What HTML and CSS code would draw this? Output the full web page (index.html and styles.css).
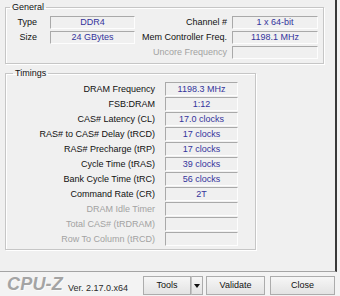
FILE: index.html
```html
<!DOCTYPE html>
<html>
<head>
<meta charset="utf-8">
<link rel="stylesheet" href="styles.css">
</head>
<body>
<div class="panel">
  <fieldset class="group general">
    <legend class="lg-general">General</legend>
    <div class="ggrid">
      <div class="lab l1">Type</div>
      <div class="fld">DDR4</div>
      <div class="lab l3">Channel #</div>
      <div class="fld">1 x 64-bit</div>
      <div class="lab l1">Size</div>
      <div class="fld">24 GBytes</div>
      <div class="lab l3">Mem Controller Freq.</div>
      <div class="fld">1198.1 MHz</div>
      <div class="lab l1"></div>
      <div class="empty"></div>
      <div class="lab l3 dis">Uncore Frequency</div>
      <div class="fld"></div>
    </div>
  </fieldset>
  <fieldset class="group timings">
    <legend class="lg-timings">Timings</legend>
    <div class="tgrid">
      <div class="lab tl">DRAM Frequency</div><div class="fld">1198.3 MHz</div>
      <div class="lab tl">FSB:DRAM</div><div class="fld">1:12</div>
      <div class="lab tl">CAS# Latency (CL)</div><div class="fld">17.0 clocks</div>
      <div class="lab tl">RAS# to CAS# Delay (tRCD)</div><div class="fld">17 clocks</div>
      <div class="lab tl">RAS# Precharge (tRP)</div><div class="fld">17 clocks</div>
      <div class="lab tl">Cycle Time (tRAS)</div><div class="fld">39 clocks</div>
      <div class="lab tl">Bank Cycle Time (tRC)</div><div class="fld">56 clocks</div>
      <div class="lab tl">Command Rate (CR)</div><div class="fld">2T</div>
      <div class="lab tl dis">DRAM Idle Timer</div><div class="fld"></div>
      <div class="lab tl dis">Total CAS# (tRDRAM)</div><div class="fld"></div>
      <div class="lab tl dis">Row To Column (tRCD)</div><div class="fld"></div>
    </div>
  </fieldset>
</div>
<div class="footer">
  <div class="logo">CPU-Z</div>
  <div class="ver">Ver. 2.17.0.x64</div>
  <div class="btn tools">Tools</div>
  <div class="btn arrow"><span class="tri"></span></div>
  <div class="btn validate">Validate</div>
  <div class="btn close">Close</div>
</div>
</body>
</html>
```
FILE: styles.css
```css
* { box-sizing: border-box; }
body {
  margin: 0;
  width: 340px;
  height: 296px;
  overflow: hidden;
  background: #f3f3f3;
  font-family: "Liberation Sans", Arial, sans-serif;
  font-size: 9px;
  color: #111;
}
.panel {
  width: 337px;
  height: 272px;
  background: #f0f0f0;
  border-right: 2px solid #3a3a3a;
  border-bottom: 1px solid #a4a4a4;
  padding: 2px 0 0 5px;
}
.group {
  margin: 0;
  border: 1px solid #c6c6c6;
  box-shadow: inset 1px 1px 0 #fff, 1px 1px 0 #fff;
  min-width: 0;
}
legend {
  line-height: 10px;
  padding: 0 2px;
  color: #111;
}
.lg-general { margin-left: 4px; }
.lg-timings { margin-left: 7px; }
.general {
  width: 319px;
  padding: 4px 5px 4px 0;
}
.ggrid {
  display: grid;
  grid-template-columns: 44px 85px 97px 86px;
  grid-auto-rows: 13px;
  row-gap: 2px;
}
.lab {
  text-align: right;
  white-space: nowrap;
  line-height: 13px;
}
.l1 { padding-right: 13px; }
.l3 { padding-right: 5px; }
.dis { color: #a2a2a2; }
.fld {
  border: 1px solid;
  border-color: #a9a9a9 #fdfdfd #fdfdfd #a9a9a9;
  text-align: center;
  color: #34349c;
  line-height: 11px;
  white-space: nowrap;
}
.timings {
  margin-top: 4px;
  width: 251px;
  padding: 4px 17px 3px 0;
}
.tgrid {
  display: grid;
  grid-template-columns: 159px 73px;
  grid-auto-rows: 14px;
  row-gap: 1px;
}
.tl { padding-right: 10px; line-height: 14px; }
.tgrid .fld { line-height: 12px; }
.footer {
  display: flex;
  align-items: flex-start;
  padding: 4px 0 0 7px;
  height: 23px;
}
.logo {
  width: 61px;
  margin-top: -1px;
  font-size: 18px;
  line-height: 18px;
  font-weight: bold;
  font-style: italic;
  color: #a4a4a4;
  text-shadow: 1px 1px 0 #fafafa;
  letter-spacing: 0.2px;
}
.ver {
  width: 75px;
  margin-top: 7px;
  line-height: 10px;
  color: #2a2a2a;
}
.btn {
  height: 19px;
  border: 1px solid #acacac;
  background: linear-gradient(#f6f6f6, #e3e3e3);
  text-align: center;
  line-height: 17px;
  color: #111;
}
.tools { width: 48px; }
.arrow { width: 12px; border-left: 1px solid #c4c4c4; display: flex; align-items: center; justify-content: center; }
.tri {
  width: 0; height: 0;
  border-left: 3px solid transparent;
  border-right: 3px solid transparent;
  border-top: 4px solid #111;
}
.validate { width: 59px; margin-left: 3px; }
.close { width: 65px; margin-left: 5px; }
```
